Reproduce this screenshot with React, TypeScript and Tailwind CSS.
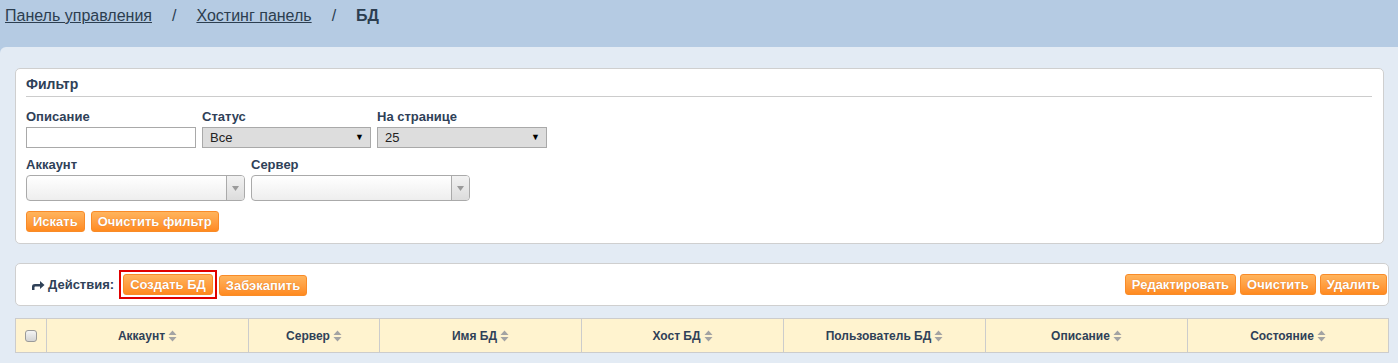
import React from "react";

const font = { fontFamily: '"Liberation Sans", Arial, sans-serif' };

function Btn({ children }: { children: React.ReactNode }) {
  return (
    <button className="h-[21px] px-[6px] rounded-[3px] border border-[#f98b28] bg-gradient-to-b from-[#ffb45c] to-[#ff8a1e] text-white font-bold text-[13px] leading-[19px] [text-shadow:0_0_1px_rgba(180,80,0,0.6)] whitespace-nowrap">
      {children}
    </button>
  );
}

function NativeSelect({ value, w }: { value: string; w: string }) {
  return (
    <div className={`${w} h-[21px] border border-[#a9a9a9] bg-[#dddddd] flex items-center justify-between pl-[7px] pr-[6px] text-[13px] text-[#222]`}>
      <span>{value}</span>
      <span className="text-[9px] text-black">▼</span>
    </div>
  );
}

function Select2({ w }: { w: string }) {
  return (
    <div className={`${w} h-[26px] border border-[#aaaaaa] rounded-[4px] bg-gradient-to-b from-white to-[#eeeeee] flex justify-end overflow-hidden`}>
      <div className="w-[18px] h-full border-l border-[#aaaaaa] bg-gradient-to-b from-[#f2f2f2] to-[#dcdcdc] flex items-center justify-center">
        <svg width="7" height="5" viewBox="0 0 7 5"><path d="M0 0h7L3.5 5z" fill="#9a9a9a" /></svg>
      </div>
    </div>
  );
}

function Label({ children }: { children: React.ReactNode }) {
  return <div className="text-[13px] font-bold text-[#2f4158] leading-[15px] mb-[3px]">{children}</div>;
}

function SortIcon() {
  return (
    <svg width="9" height="12" viewBox="0 0 9 12" className="ml-[3px] inline-block">
      <path d="M4.5 0.5L8.5 5H0.5z" fill="#a3a3a3" />
      <path d="M4.5 11.5L8.5 7H0.5z" fill="#a3a3a3" />
    </svg>
  );
}

const cols = [
  { t: "Аккаунт", w: "w-[202px]" },
  { t: "Сервер", w: "w-[131px]" },
  { t: "Имя БД", w: "w-[202px]" },
  { t: "Хост БД", w: "w-[202px]" },
  { t: "Пользователь БД", w: "w-[202px]" },
  { t: "Описание", w: "w-[202px]" },
  { t: "Состояние", w: "flex-1" },
];

export default function App() {
  return (
    <div style={font} className="w-[1398px] h-[363px] bg-[#b5cbe3] overflow-hidden flex flex-col">
      <div className="h-[47px] shrink-0 flex items-start pl-[5px] pt-[6px] text-[16px] text-[#2c3e50] leading-[20px]">
        <a className="underline">Панель управления</a>
        <span className="mx-[20px]">/</span>
        <a className="underline">Хостинг панель</a>
        <span className="mx-[20px]">/</span>
        <span className="font-bold">БД</span>
      </div>
      <div className="flex-1 bg-[#e3ebf4] rounded-tl-[6px] pl-[15px] pr-[9px] pt-[21px] flex flex-col">
        {/* Filter panel */}
        <div className="mr-[5px] h-[176px] bg-white border border-[#cfcfcf] rounded-[5px] px-[10px] pt-[7px]">
          <div className="text-[14px] font-bold text-[#2f4158] leading-[17px] pb-[3px] border-b border-[#cccccc] mr-[1px]">Фильтр</div>
          <div className="flex gap-[6px] mt-[12px]">
            <div>
              <Label>Описание</Label>
              <div className="w-[170px] h-[21px] border border-[#a9a9a9] bg-white" />
            </div>
            <div>
              <Label>Статус</Label>
              <NativeSelect value="Все" w="w-[169px]" />
            </div>
            <div>
              <Label>На странице</Label>
              <NativeSelect value="25" w="w-[170px]" />
            </div>
          </div>
          <div className="flex gap-[6px] mt-[9px]">
            <div>
              <Label>Аккаунт</Label>
              <Select2 w="w-[219px]" />
            </div>
            <div>
              <Label>Сервер</Label>
              <Select2 w="w-[219px]" />
            </div>
          </div>
          <div className="flex gap-[6px] mt-[10px]">
            <Btn>Искать</Btn>
            <Btn>Очистить фильтр</Btn>
          </div>
        </div>
        {/* Actions panel */}
        <div className="mt-[19px] h-[43px] bg-white border border-[#cfcfcf] rounded-[5px] flex items-center pl-[15px] pr-[1px]">
          <svg width="14" height="11" viewBox="0 0 14 11" className="mr-[3px] mt-[1px]">
            <path d="M1 10V6.5C1 4.8 2.2 4 4 4H9V1L13.5 5L9 9V6.5H4.5C3.8 6.5 3.5 6.8 3.5 7.5V10Z" fill="#2f4158" />
          </svg>
          <span className="text-[13px] font-bold text-[#2f4158] mr-[5px]">Действия:</span>
          <div className="border-2 border-[#e00000] px-[2px] py-[2px] flex">
            <Btn>Создать БД</Btn>
          </div>
          <div className="ml-[2px]">
            <Btn>Забэкапить</Btn>
          </div>
          <div className="ml-auto flex gap-[4px]">
            <Btn>Редактировать</Btn>
            <Btn>Очистить</Btn>
            <Btn>Удалить</Btn>
          </div>
        </div>
        {/* Table */}
        <div className="mt-[12px] h-[35px] bg-[#fff3cf] border border-[#cccccc] flex">
          <div className="w-[31px] border-r border-[#cccccc] flex items-center justify-center">
            <div className="w-[12px] h-[12px] rounded-[3px] border border-[#9a9a9a] bg-gradient-to-b from-[#f4f4f4] to-[#d4d4d4]" />
          </div>
          {cols.map((c, i) => (
            <div
              key={c.t}
              className={`${c.w} ${i < cols.length - 1 ? "border-r border-[#cccccc]" : ""} flex items-center justify-center text-[12px] font-bold text-[#2f4158]`}
            >
              <span>{c.t}</span>
              <SortIcon />
            </div>
          ))}
        </div>
      </div>
    </div>
  );
}
